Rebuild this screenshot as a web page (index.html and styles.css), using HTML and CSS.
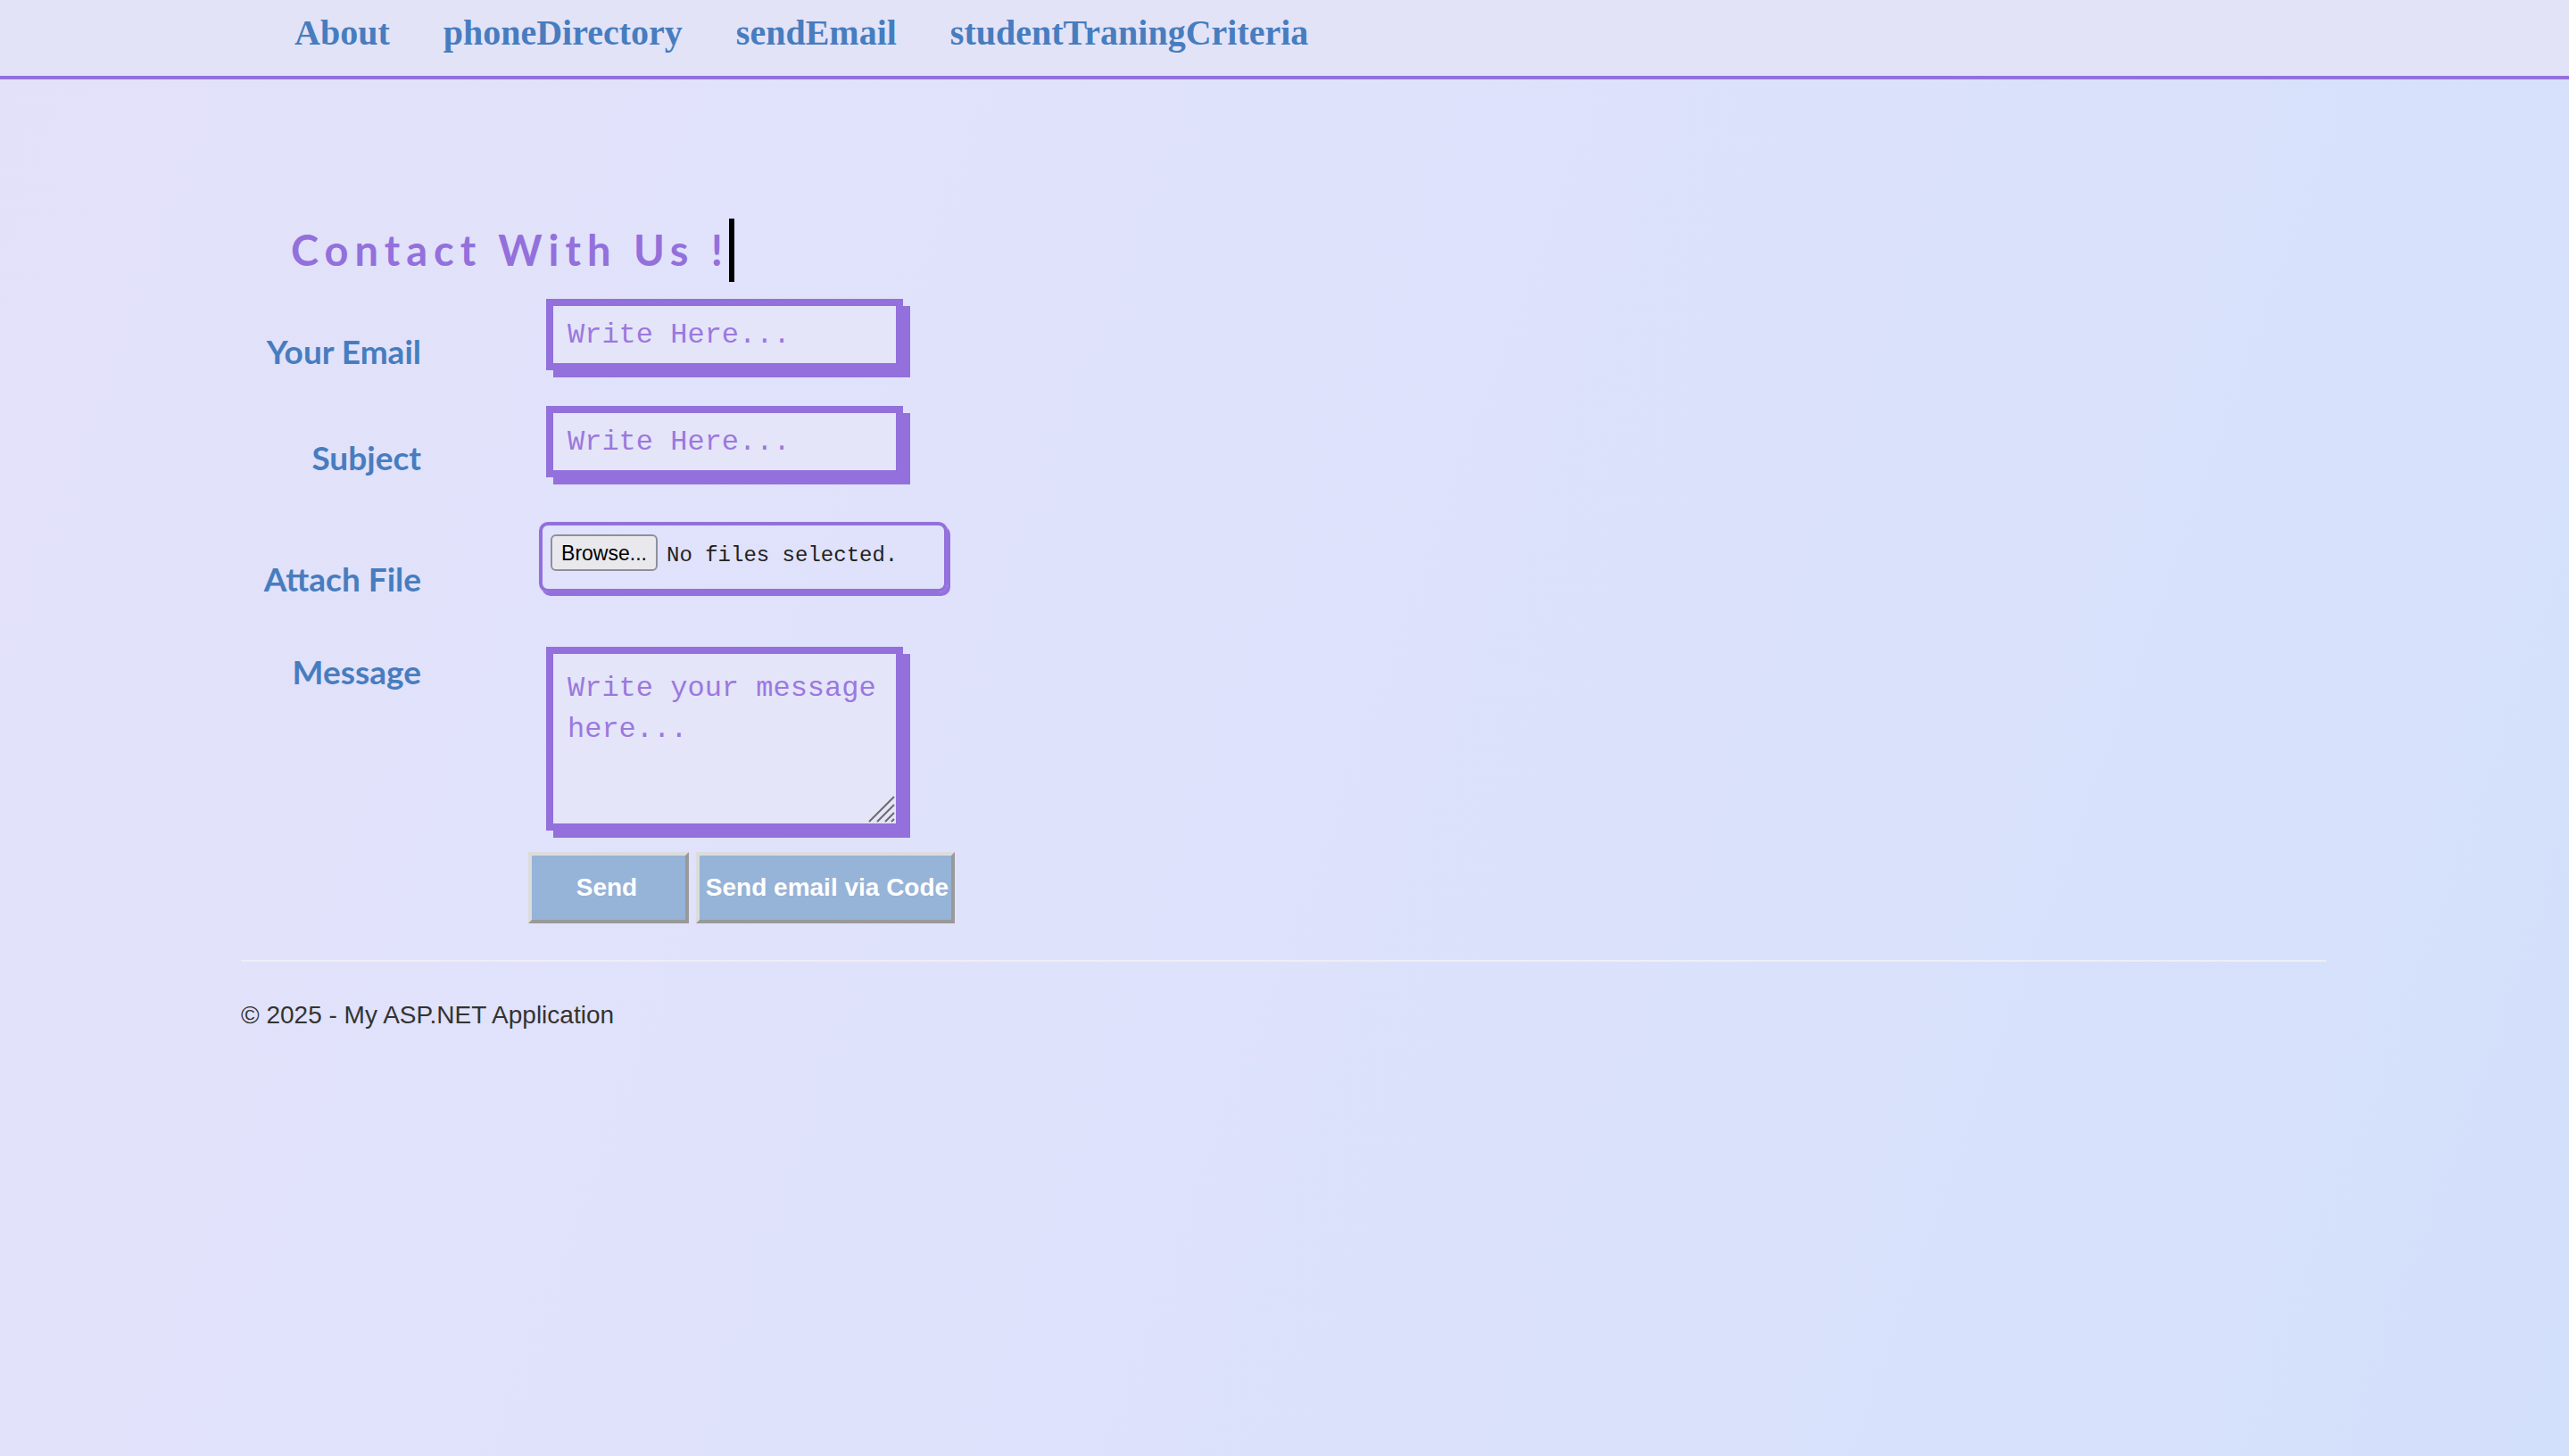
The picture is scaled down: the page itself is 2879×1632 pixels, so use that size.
FILE: index.html
```html
<!DOCTYPE html>
<html lang="en">
<head>
<meta charset="utf-8">
<title>Contact</title>
<link rel="stylesheet" href="styles.css">
</head>
<body>
<header class="topbar">
  <nav class="nav">
    <a class="nav-link" href="#">About</a>
    <a class="nav-link" href="#">phoneDirectory</a>
    <a class="nav-link" href="#">sendEmail</a>
    <a class="nav-link" href="#">studentTraningCriteria</a>
  </nav>
</header>
<main class="page">
  <div class="title-wrap"><h2 class="title">Contact With Us !</h2></div>
  <form class="form">
    <div class="row row-email">
      <label class="label">Your Email</label>
      <input class="box-input" type="text" placeholder="Write Here...">
    </div>
    <div class="row row-subject">
      <label class="label">Subject</label>
      <input class="box-input" type="text" placeholder="Write Here...">
    </div>
    <div class="row row-file">
      <label class="label label-file">Attach File</label>
      <div class="file-box">
        <span class="browse">Browse...</span>
        <span class="file-text">No files selected.</span>
      </div>
    </div>
    <div class="row row-message">
      <label class="label label-message">Message</label>
      <div class="area-wrap">
        <textarea class="box-area" placeholder="Write your message here..."></textarea>
        <svg class="grip" width="30" height="30" viewBox="0 0 30 30" aria-hidden="true">
          <line x1="1" y1="29" x2="29" y2="1" stroke="#6a6a6a" stroke-width="2"/>
          <line x1="10" y1="29" x2="29" y2="10" stroke="#6a6a6a" stroke-width="2"/>
          <line x1="19" y1="29" x2="29" y2="19" stroke="#6a6a6a" stroke-width="2"/>
          <line x1="26" y1="29" x2="29" y2="26" stroke="#6a6a6a" stroke-width="2"/>
        </svg>
      </div>
    </div>
    <div class="row row-buttons">
      <span class="label"></span>
      <div class="buttons">
        <button type="button" class="btn btn-send">Send</button>
        <button type="button" class="btn btn-code">Send email via Code</button>
      </div>
    </div>
  </form>
  <hr class="rule">
  <footer class="footer">
    <p class="copy">© 2025 - My ASP.NET Application</p>
  </footer>
</main>
</body>
</html>
```
FILE: styles.css
```css
html, body {
  margin: 0;
  padding: 0;
}
body {
  min-height: 1632px;
  background: linear-gradient(110deg, #e3e1fa 0%, #dfe2fb 45%, #d3e0fb 100%);
  font-family: "Liberation Sans", Arial, sans-serif;
}
.topbar {
  box-sizing: border-box;
  height: 89px;
  background: #e3e3f8;
  border-bottom: 4px solid #9370db;
}
.nav {
  display: flex;
  gap: 60px;
  padding: 14px 0 0 330px;
}
.nav-link {
  font-family: "Liberation Serif", "Times New Roman", serif;
  font-weight: bold;
  font-size: 40px;
  line-height: 46px;
  color: #477dbf;
  text-decoration: none;
}
.page {
  padding: 0 272px 0 270px;
}
.title-wrap {
  margin-top: 156px;
  padding-left: 56px;
}
.title {
  display: inline-block;
  margin: 0;
  font-family: Lato, "Open Sans", sans-serif;
  font-weight: bold;
  font-size: 47px;
  line-height: 71px;
  letter-spacing: 7px;
  color: #9370db;
  border-right: 6px solid #000;
  padding-right: 0;
  white-space: nowrap;
}
.form {
  display: flex;
  flex-direction: column;
}
.row {
  display: flex;
  align-items: flex-end;
}
.row-email { margin-top: 19px; }
.row-subject { margin-top: 40px; }
.row-file { margin-top: 50px; }
.row-message { margin-top: 61px; align-items: flex-start; }
.row-buttons { margin-top: 24px; }
.label {
  flex: none;
  width: 202px;
  text-align: right;
  font-family: Lato, "Open Sans", sans-serif;
  font-weight: bold;
  font-size: 37px;
  line-height: 37px;
  color: #477dbf;
  margin-bottom: 3px;
}
.row-subject .label { margin-bottom: 4px; }
.label-file { margin-bottom: -3px; }
.label-message { margin-bottom: 0; padding-top: 9px; }
.box-input, .box-area {
  box-sizing: border-box;
  width: 400px;
  border: 8px solid #9370db;
  background: #e5e5f9;
  box-shadow: 8px 8px 0 #9370db;
  font-family: "Liberation Mono", "Courier New", monospace;
  font-size: 32px;
  color: #333;
  outline: none;
  border-radius: 0;
}
.box-input {
  height: 80px;
  padding: 0 16px;
  margin: 0 0 0 140px;
}
.area-wrap {
  position: relative;
  margin-left: 140px;
  width: 400px;
  height: 206px;
}
.box-area {
  height: 206px;
  margin: 0;
  padding: 16px 16px;
  line-height: 46px;
  resize: none;
  display: block;
}
.grip {
  position: absolute;
  right: 9px;
  bottom: 9px;
}
.box-input::placeholder, .box-area::placeholder {
  color: #9b78de;
  opacity: 1;
}
.file-box {
  box-sizing: border-box;
  margin-left: 132px;
  width: 458px;
  height: 79px;
  border: 4px solid #9370db;
  border-radius: 10px;
  box-shadow: 3px 4px 0 #9370db;
  padding: 10px 9px 0;
  display: flex;
  align-items: flex-start;
  gap: 10px;
}
.browse {
  box-sizing: border-box;
  width: 120px;
  height: 41px;
  border: 2px solid #8f8f9d;
  border-radius: 6px;
  background: #e9e9ed;
  color: #000;
  font-family: "Liberation Sans", Arial, sans-serif;
  font-size: 23px;
  line-height: 38px;
  text-align: center;
}
.file-text {
  font-family: "Liberation Mono", "Courier New", monospace;
  font-size: 24px;
  line-height: 41px;
  padding-top: 3px;
  color: #222;
}
.buttons {
  margin-left: 120px;
  display: flex;
  gap: 8px;
}
.btn {
  box-sizing: border-box;
  height: 80px;
  padding: 0;
  background: #96b3d8;
  border-style: solid;
  border-width: 4px;
  border-color: #dcdcdc #999 #999 #dcdcdc;
  color: #fff;
  font-family: "Liberation Sans", Arial, sans-serif;
  font-weight: bold;
  font-size: 28px;
  white-space: nowrap;
}
.btn-send { width: 180px; padding-right: 4px; }
.btn-code { width: 290px; padding-left: 4px; }
.rule {
  margin: 41px 0 0;
  border: 0;
  border-top: 2px solid #ededf4;
  height: 0;
}
.footer {
  padding-top: 44px;
}
.copy {
  margin: 0;
  font-family: "Liberation Sans", Arial, sans-serif;
  font-size: 28px;
  color: #333;
}
```
